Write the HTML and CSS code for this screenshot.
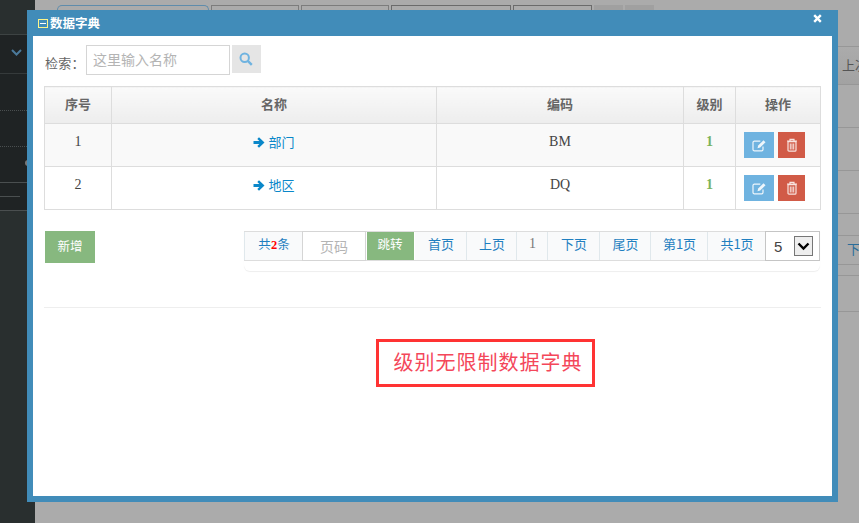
FILE: index.html
```html
<!DOCTYPE html>
<html lang="zh-CN">
<head>
<meta charset="utf-8">
<title>数据字典</title>
<link rel="stylesheet" href="styles.css">
</head>
<body>
<div class="page">
  <aside class="side">
    <div class="side-top"></div>
    <div class="side-item side-arrow">
      <svg class="chev" width="11" height="7" viewBox="0 0 11 7"><path d="M1 1l4.500 4.500L10 1" fill="none" stroke="#4b7a9b" stroke-width="2"/></svg>
    </div>
    <div class="side-item side-dotted"></div>
    <div class="side-item side-dotted2"></div>
    <div class="side-item side-plain"><span class="knob"></span></div>
    <div class="side-item side-short"><span class="short-line"></span></div>
    <div class="side-rest"></div>
  </aside>
  <main class="main">
    <div class="tabs">
      <span class="tab tab-a"></span>
      <span class="tab tab-b"></span>
      <span class="tab tab-c"></span>
      <span class="tab tab-d"></span>
      <span class="tab tab-e"></span>
      <span class="tab tab-f"></span>
      <span class="tab tab-g"></span>
    </div>
    <div class="rows">
      <div class="row row-head">上次</div>
      <div class="row row-43"></div>
      <div class="row row-43"></div>
      <div class="row row-43"></div>
      <div class="row row-22"></div>
      <div class="row row-link">下页</div>
      <div class="row row-11"></div>
      <div class="row row-36"></div>
      <div class="row row-36"></div>
    </div>
  </main>
</div>

<section class="modal">
  <header class="modal-title">
    <span class="title-left">
      <svg class="title-icon" width="10" height="9" viewBox="0 0 10 9"><rect x=".5" y=".5" width="9" height="8" fill="#3f8cb9" stroke="#fdf58a"/><path d="M2 4.500h6" stroke="#fff"/></svg>
      <span>数据字典</span>
    </span>
    <svg class="close" width="9" height="9" viewBox="0 0 9 9"><path d="M1.200 1.200l6.600 6.600M7.800 1.200L1.200 7.800" stroke="#fff" stroke-width="2.400"/></svg>
  </header>
  <div class="modal-body">
    <div class="search">
      <label class="search-label">检索：</label>
      <span class="search-input">这里输入名称</span>
      <button class="search-btn" type="button">
        <svg width="14" height="14" viewBox="0 0 14 14"><circle cx="5.700" cy="5.700" r="4.200" fill="none" stroke="#6fb3e0" stroke-width="2"/><path d="M8.800 8.800l4 4" stroke="#6fb3e0" stroke-width="2.400"/></svg>
      </button>
    </div>
    <table class="grid">
      <thead>
        <tr><th class="c1">序号</th><th class="c2">名称</th><th class="c3">编码</th><th class="c4">级别</th><th class="c5">操作</th></tr>
      </thead>
      <tbody>
        <tr class="stripe">
          <td>1</td>
          <td><a class="name"><svg class="arrow" width="12" height="11" viewBox="0 0 12 11"><path d="M6 .3l5.500 5.200L6 10.700 4.300 9l2.100-2H.5V4h5.900L4.300 2z" fill="#0a87c9"/></svg>部门</a></td>
          <td>BM</td>
          <td class="level">1</td>
          <td class="ops">
            <div class="op-group">
              <button class="op op-edit" type="button"><svg width="15" height="13" viewBox="0 0 15 13"><path d="M11 7.500v3a1.300 1.300 0 0 1-1.300 1.300H2.300A1.300 1.300 0 0 1 1 10.500V3.500a1.300 1.300 0 0 1 1.300-1.300h6" fill="none" stroke="#eef6fb" stroke-width="1.200"/><path d="M5.500 9.200l.7-2.700L11.500 1.200l2 2-5.300 5.300z" fill="#eef6fb"/></svg></button>
              <button class="op op-del" type="button"><svg width="12" height="14" viewBox="0 0 12 14"><path d="M1 3h10M4 3V1.300h4V3" fill="none" stroke="#f8e4e0" stroke-width="1.200"/><path d="M2 3.600h8v8.600a1 1 0 0 1-1 1H3a1 1 0 0 1-1-1z" fill="none" stroke="#f8e4e0" stroke-width="1.200"/><path d="M4.300 5.500v6M6 5.500v6M7.700 5.500v6" stroke="#f8e4e0"/></svg></button>
            </div>
          </td>
        </tr>
        <tr>
          <td>2</td>
          <td><a class="name"><svg class="arrow" width="12" height="11" viewBox="0 0 12 11"><path d="M6 .3l5.500 5.200L6 10.700 4.300 9l2.100-2H.5V4h5.900L4.300 2z" fill="#0a87c9"/></svg>地区</a></td>
          <td>DQ</td>
          <td class="level">1</td>
          <td class="ops">
            <div class="op-group">
              <button class="op op-edit" type="button"><svg width="15" height="13" viewBox="0 0 15 13"><path d="M11 7.500v3a1.300 1.300 0 0 1-1.300 1.300H2.300A1.300 1.300 0 0 1 1 10.500V3.500a1.300 1.300 0 0 1 1.300-1.300h6" fill="none" stroke="#eef6fb" stroke-width="1.200"/><path d="M5.500 9.200l.7-2.700L11.500 1.200l2 2-5.300 5.300z" fill="#eef6fb"/></svg></button>
              <button class="op op-del" type="button"><svg width="12" height="14" viewBox="0 0 12 14"><path d="M1 3h10M4 3V1.300h4V3" fill="none" stroke="#f8e4e0" stroke-width="1.200"/><path d="M2 3.600h8v8.600a1 1 0 0 1-1 1H3a1 1 0 0 1-1-1z" fill="none" stroke="#f8e4e0" stroke-width="1.200"/><path d="M4.300 5.500v6M6 5.500v6M7.700 5.500v6" stroke="#f8e4e0"/></svg></button>
            </div>
          </td>
        </tr>
      </tbody>
    </table>
    <div class="actions">
      <button class="add" type="button">新增</button>
      <nav class="pager">
        <div class="pager-row">
          <span class="pg pg-total">共<b class="red">2</b>条</span>
          <span class="pg-input">页码</span>
          <span class="pg-go">跳转</span>
          <a class="pg pg-first">首页</a>
          <a class="pg pg-prev">上页</a>
          <span class="pg pg-cur">1</span>
          <a class="pg pg-next">下页</a>
          <a class="pg pg-last">尾页</a>
          <a class="pg pg-nth">第1页</a>
          <a class="pg pg-all">共1页</a>
          <span class="pg-select">5<span class="select-box"><svg width="13" height="9" viewBox="0 0 13 9"><path d="M1.500 1.500l5 5 5-5" fill="none" stroke="#000" stroke-width="2.400"/></svg></span></span>
        </div>
      </nav>
    </div>
    <hr class="rule">
    <div class="note-wrap"><div class="note">级别无限制数据字典</div></div>
  </div>
</section>
</body>
</html>
```

FILE: styles.css
```css
* { box-sizing: border-box; }
html, body { margin: 0; padding: 0; height: 100%; }
body {
  background: #ababab;
  font-family: "Noto Sans CJK SC", "Liberation Sans", sans-serif;
  overflow: hidden;
  width: 859px;
  height: 523px;
  position: relative;
}
.page { display: flex; height: 523px; }

/* dimmed page behind the dialog */
.side { width: 35px; flex: none; display: flex; flex-direction: column; background: #1f2324; }
.side-top { height: 35px; background: #292f2f; border-bottom: 1px solid #3d4343; flex: none; }
.side-item { flex: none; position: relative; }
.side-arrow { height: 39px; border-bottom: 1px solid #353a3b; padding: 14px 0 0 11px; }
.chev { display: block; }
.side-dotted { height: 37px; border-bottom: 1px dotted #4a4f50; }
.side-dotted2 { height: 36px; border-bottom: 1px dotted #4a4f50; }
.side-plain { height: 36px; border-bottom: 1px solid #4a4f50; }
.knob { position: absolute; left: 25px; top: 13px; width: 6px; height: 6px; border-radius: 50%; background: #777; }
.side-short { height: 28px; border-bottom: 1px solid #4a4f50; padding-top: 13px; }
.short-line { display: block; width: 20px; height: 1px; background: #4a4f50; }
.side-rest { flex: 1; background: #292f2f; }

.main { flex: 1; min-width: 0; display: flex; flex-direction: column; }
.tabs { display: flex; height: 46px; padding: 5px 0 0 22px; flex: none; }
.tab { display: block; height: 20px; margin-right: 2px; border: 1px solid #7c7c7c; border-bottom: 0; }
.tab-a { width: 152px; border-color: #5f8cab; border-radius: 5px 5px 0 0; }
.tab-b { width: 88px; margin-right: 2px; }
.tab-c { width: 88px; }
.tab-d { width: 120px; border-color: #6b6b6b; }
.tab-e { width: 79px; border-color: #6b6b6b; }
.tab-f { width: 29px; background: #a0a0a0; border: 0; }
.tab-g { width: 29px; background: #a0a0a0; border: 0; }

.rows { flex: 1; display: flex; flex-direction: column; }
.row { flex: none; border-top: 1px solid #979797; text-align: right; overflow: hidden; white-space: nowrap; }
.row-head {
  height: 38px; background: linear-gradient(#ababab, #a2a2a2);
  font-size: 13px; line-height: 36px; color: #555; padding-left: 807px; text-align: left;
}
.row-43 { height: 43px; }
.row-22 { height: 22px; }
.row-link { height: 29px; font-size: 13px; line-height: 26px; color: #2a6d9a; padding-left: 812px; text-align: left; }
.row-11 { height: 11px; }
.row-36 { height: 36px; }

/* dialog */
.modal {
  position: absolute; left: 27px; top: 10px; width: 811px; height: 492px;
  background: #418cb9; padding: 0 6px 6px; display: flex; flex-direction: column;
}
.modal-title { height: 26px; flex: none; display: flex; justify-content: space-between; color: #fff; }
.title-left { display: flex; align-items: center; font-size: 12.500px; font-weight: 700; padding: 0 0 2px 5px; height: 26px; }
.title-icon { margin-right: 2px; flex: none; margin-top: 2px; }
.close { margin: 4px 10px 0 0; }
.modal-body { flex: 1; background: #fff; padding: 9px 11px 0; min-height: 0; }

.search { display: flex; height: 41px; padding-left: 1px; align-items: flex-start; }
.search-label { font-size: 13px; color: #666; line-height: 18px; padding-top: 9px; width: 41px; flex: none; letter-spacing: .3px; }
.search-input {
  width: 144px; height: 30px; border: 1px solid #d5d5d5; font-size: 14px; color: #b4b4b4;
  line-height: 26px; padding-left: 6px; flex: none;
}
.search-btn {
  width: 29px; height: 28px; margin-left: 2px; border: 0; padding: 0 1px 1px 0; background: #e5e5e5;
  display: flex; align-items: center; justify-content: center; flex: none;
}

.grid { border-collapse: collapse; width: 776px; table-layout: fixed; font-family: "Liberation Serif", "Noto Sans CJK SC", serif; font-size: 14px; color: #444; }
.grid th, .grid td { border: 1px solid #ddd; text-align: center; padding: 0; }
.grid th {
  height: 37px; padding-bottom: 3px; font-family: "Noto Sans CJK SC", sans-serif; font-size: 13px; font-weight: 700; color: #666;
  background: linear-gradient(#fafafa, #ededed);
}
.c1 { width: 67px; }
.c2 { width: 325px; }
.c3 { width: 247px; }
.c4 { width: 52px; }
.c5 { width: 85px; }
.grid td { height: 43px; vertical-align: top; padding-top: 9px; line-height: 18px; }
.stripe td { background: #f9f9f9; }
.name { color: #0a87c9; font-family: "Noto Sans CJK SC", sans-serif; font-size: 13px; vertical-align: 2px; }
.arrow { margin-right: 3px; vertical-align: -1px; }
.level { color: #7ab35c; font-weight: 700; }
.grid td.ops { padding: 8px 0 0 8px; text-align: left; }
.op-group { display: flex; gap: 4px; }
.op { display: flex; align-items: center; justify-content: center; height: 26px; border: 0; padding: 0; flex: none; }
.op-edit { width: 30px; background: #6fb3e0; }
.op-del { width: 27px; background: #d15b47; }

.actions { display: flex; justify-content: space-between; align-items: flex-start; margin-top: 21px; padding: 0 1px; height: 76px; }
.add { width: 50px; height: 32px; border: 0; padding: 0 0 3px; background: #87b87f; color: #fff; font: 12.500px "Noto Sans CJK SC", sans-serif; }
.pager {
  width: 576px; height: 40px; border-radius: 0 0 6px 6px;
  box-shadow: 0 1px 1px #eee; flex: none;
}
.pager-row { display: flex; height: 30px; border-bottom: 1px solid #ddd; border-top: 1px solid #ddd; }
.pg {
  flex: none; height: 28px; background: #f9fafb; border-right: 1px solid #e0e8ec; font-size: 13px; padding-left: 1px;
  color: #1f7fc0; line-height: 24px; text-align: center; font-family: "Noto Sans CJK SC", "Liberation Serif", serif;
}
.pg b { font-weight: 700; font-family: "Liberation Serif", serif; }
.red { color: #f00; }
.pg-total { width: 58px; border-left: 1px solid #e0e8ec; border-right: 0; font-size: 12.500px; }
.pg-input {
  flex: none; width: 64px; height: 30px; margin-top: -1px; margin-bottom: -1px; border: 1px solid #d5d5d5; background: #fff; color: #b4b4b4;
  font-size: 14px; line-height: 29px; text-align: center;
}
.pg-go {
  flex: none; width: 49px; height: 28px; background: #87b87f; color: #fff; font-size: 12.500px; line-height: 24px;
  text-align: center; border-left: 1px solid #fff; border-right: 1px solid #fff; padding-right: 1px;
}
.pg-first { width: 52px; }
.pg-prev { width: 50px; }
.pg-cur { width: 31px; color: #777; font-size: 14px; font-family: "Liberation Serif", serif; }
.pg-next { width: 52px; }
.pg-last { width: 51px; }
.pg-nth { width: 57px; }
.pg-all { width: 57px; border-right: 0; }
.pg-select {
  flex: none; width: 55px; height: 30px; margin-top: -1px; margin-bottom: -1px; border: 1px solid #c5c5c5; background: #fff;
  color: #444; font: 15px/29px "Liberation Sans", sans-serif; padding-left: 8px;
  display: flex; justify-content: space-between;
}
.select-box {
  width: 19px; height: 20px; margin: 4px 6px 0 0; background: #eee; border: 1px solid #767676;
  display: flex; align-items: center; justify-content: center; flex: none;
}

.rule { border: 0; border-top: 1px solid #eee; margin: 0; width: 777px; }
.note-wrap { display: flex; padding: 31px 0 0 332px; }
.note {
  width: 219px; height: 48px; border: 3px solid #f33; color: #f4475a;
  font-size: 20px; letter-spacing: 1px; line-height: 39px; text-indent: 5px; text-align: center; white-space: nowrap;
}
```
